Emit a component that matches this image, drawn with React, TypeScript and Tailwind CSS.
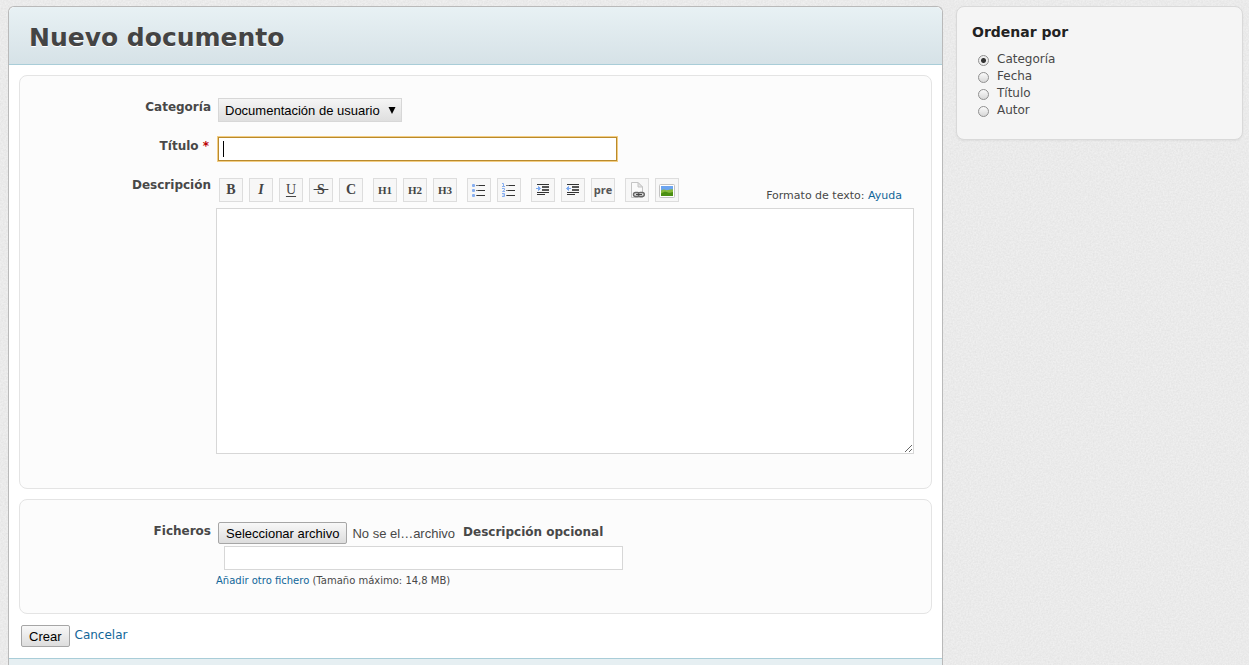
import React, { useRef, useState } from 'react';

const ORDERS = ['Categoría', 'Fecha', 'Título', 'Autor'];

const CATEGORIES = ['Documentación de usuario', 'Documentación técnica'];

type Tool = {
    title: string;
    icon: React.ReactNode;
};

const lines = (
    <>
        <path d="M5 3.5h9M5 8.5h9M5 13.5h9" stroke="#777" />
        <path d="M8 3.5h6M7 8.5h7M6 13.5h8" stroke="#333" />
    </>
);

const indentLines = (
    <g stroke="#333">
        <path d="M2 2.5h12M2 10.5h12M2 12.5h8" />
        <path d="M7 5h7M7 8h7" strokeWidth="2" stroke="#555" />
    </g>
);

const TOOL_GROUPS: Tool[][] = [
    [
        { title: 'Negrita', icon: <b className="text-sm">B</b> },
        { title: 'Cursiva', icon: <b className="text-sm italic">I</b> },
        { title: 'Subrayado', icon: <span className="text-sm underline underline-offset-2">U</span> },
        { title: 'Tachado', icon: <b className="text-sm line-through">{'\u00a0S\u00a0'}</b> },
        { title: 'Código fuente', icon: <b className="text-sm">C</b> },
    ],
    [
        { title: 'Encabezado 1', icon: <b className="text-[11px]">H1</b> },
        { title: 'Encabezado 2', icon: <b className="text-[11px]">H2</b> },
        { title: 'Encabezado 3', icon: <b className="text-[11px]">H3</b> },
    ],
    [
        {
            title: 'Lista sin orden',
            icon: (
                <svg width="16" height="16" viewBox="0 0 16 16" fill="none">
                    {lines}
                    <g fill="#86aef0">
                        <rect x="1" y="2" width="3" height="3" rx="1" />
                        <rect x="1" y="7" width="3" height="3" rx="1" />
                        <rect x="1" y="12" width="3" height="3" rx="1" />
                    </g>
                </svg>
            ),
        },
        {
            title: 'Lista ordenada',
            icon: (
                <svg width="16" height="16" viewBox="0 0 16 16" fill="none">
                    {lines}
                    <g stroke="#86aef0">
                        <path d="M1 1.5h1.5V4M1 4.5h3M1 6.5h2.5v1.5L1.5 9.5H4M1 11.5h2.5v3H1M1.5 13h2" />
                    </g>
                </svg>
            ),
        },
    ],
    [
        {
            title: 'Citar',
            icon: (
                <svg width="16" height="16" viewBox="0 0 16 16" fill="none">
                    {indentLines}
                    <path d="M1 6.5h3M3.5 4.5v4l2-2z" stroke="#7aa8f0" fill="#7aa8f0" />
                </svg>
            ),
        },
        {
            title: 'Quitar cita',
            icon: (
                <svg width="16" height="16" viewBox="0 0 16 16" fill="none">
                    {indentLines}
                    <path d="M6 6.5H3M3.5 4.5v4l-2-2z" stroke="#7aa8f0" fill="#7aa8f0" />
                </svg>
            ),
        },
        {
            title: 'Texto preformateado',
            icon: <b className="font-['Open_Sans',sans-serif] text-[11px] leading-4 text-[#555]">pre</b>,
        },
    ],
    [
        {
            title: 'Enlace a página Wiki',
            icon: (
                <svg width="16" height="16" viewBox="0 0 16 16" fill="none">
                    <path d="M2.5 .5H9L13.5 5v10.5h-11z" fill="#fafafa" stroke="#c4c4c4" />
                    <path d="M9 .5V5h4.5z" fill="#e4e4e4" stroke="#c4c4c4" />
                    <rect x="4.5" y="10.5" width="6" height="4" rx="2" fill="#ddd" stroke="#666" strokeWidth="1.4" />
                    <rect x="9.3" y="10.5" width="6" height="4" rx="2" fill="#ddd" stroke="#666" strokeWidth="1.4" />
                    <path d="M7 12.5h6" stroke="#444" />
                </svg>
            ),
        },
        {
            title: 'Imagen',
            icon: (
                <svg width="16" height="16" viewBox="0 0 16 16" fill="none">
                    <rect x=".5" y="2.5" width="15" height="13" rx="1" fill="#fff" stroke="#c2c2c2" />
                    <path d="M2 4h12v10H2z" fill="#6ba4f0" />
                    <path d="M2 8.5c2-1 3-1.5 5-.5s4-1.5 7-.5V14H2z" fill="#86b93a" />
                    <path d="M2 11.500c3-2 5-2 7-1s3-.5 5-.5v4H2z" fill="#4b8f12" />
                </svg>
            ),
        },
    ],
];

// Paper grain behind the whole page
const Grain: React.FC = () => (
    <svg className="absolute inset-0 -z-10 h-full w-full" aria-hidden="true">
        <filter id="grain" colorInterpolationFilters="sRGB">
            <feTurbulence type="fractalNoise" baseFrequency="0.6" numOctaves="2" />
            <feColorMatrix values="0.07 0 0 0 0.884  0.07 0 0 0 0.884  0.07 0 0 0 0.884  0 0 0 0 1" />
        </filter>
        <rect width="100%" height="100%" filter="url(#grain)" />
    </svg>
);

const Toolbar: React.FC = () => (
    <div className="flex gap-[10px] pl-[3px] font-['Liberation_Serif',serif] leading-none text-[#444]">
        {TOOL_GROUPS.map(group => (
            <div key={group[0].title} className="flex gap-1.5">
                {group.map(tool => (
                    <button
                        key={tool.title}
                        type="button"
                        title={tool.title}
                        className="flex h-6 w-6 items-center justify-center border border-[#ddd] bg-[#f7f7f7]"
                    >
                        {tool.icon}
                    </button>
                ))}
            </div>
        ))}
    </div>
);

type RowProps = {
    id: string;
    label: string;
    required?: boolean;
    children: React.ReactNode;
};

const Row: React.FC<RowProps> = ({ id, label, required, children }) => (
    <div className="grid grid-cols-[191px_minmax(0,1fr)] gap-x-[5px]">
        <label htmlFor={id} className="text-right font-bold">
            {label}
            {required && <span className="pr-0.5 text-[#b00]"> *</span>}
        </label>
        <div>{children}</div>
    </div>
);

const FilePicker: React.FC = () => {
    const inputRef = useRef<HTMLInputElement>(null);
    const [fileName, setFileName] = useState('No se el…archivo');

    return (
        <div className="flex items-start">
            <input
                ref={inputRef}
                id="ficheros"
                type="file"
                tabIndex={-1}
                className="sr-only"
                onChange={e => setFileName(e.target.files?.[0]?.name ?? 'No se el…archivo')}
            />
            <button
                type="button"
                onClick={() => inputRef.current?.click()}
                className="h-[22px] rounded-xs border border-[#a6a6a6] bg-linear-to-b from-[#f8f8f8] to-[#dddddd] px-[7px] pt-px font-['Liberation_Sans',sans-serif] text-[13px] leading-5 text-black"
            >
                Seleccionar archivo
            </button>
            <span className="ml-[5px] font-['Liberation_Sans',sans-serif] text-[13px] leading-6">{fileName}</span>
            <label htmlFor="descripcion-fichero" className="ml-2 leading-5 font-bold">
                Descripción opcional
            </label>
        </div>
    );
};

const App: React.FC = () => {
    const [order, setOrder] = useState('Categoría');

    return (
        <div className="relative isolate flex min-h-screen items-stretch gap-[13px] bg-[#ebebeb] pt-1.5 pr-1.5 pl-2 font-['DejaVu_Sans',sans-serif] text-xs leading-[18px] text-[#484848]">
            <Grain />

            <main className="flex min-w-0 flex-1 flex-col rounded-t-md border border-b-0 border-[#b9b9b9] bg-white">
                <header className="rounded-t-md border-b border-[#a9cdd8] bg-linear-to-b from-[#e8f1f4] to-[#d6e2e7] px-5 pt-[15px] pb-[10px]">
                    <h1 className="text-[25px] leading-8 font-bold text-[#444] [text-shadow:0_1px_0_#fff]">
                        Nuevo documento
                    </h1>
                </header>

                <form className="px-[10px] pt-[10px] pb-[11px]" onSubmit={e => e.preventDefault()}>
                    <div className="flex flex-col gap-[15px] rounded-lg border border-[#e4e4e4] bg-[#fcfcfc] pt-[22px] pr-[17px] pb-[34px]">
                        <Row id="categoria" label="Categoría">
                            <div className="relative ml-0.5 w-fit">
                                <select
                                    id="categoria"
                                    className="block h-6 appearance-none border border-[#d7d7d7] bg-linear-to-b from-[#f5f5f5] to-[#dfdfdf] pt-0.5 pr-[21px] pl-1.5 font-['Liberation_Sans',sans-serif] text-[13px] text-black"
                                >
                                    {CATEGORIES.map(category => (
                                        <option key={category}>{category}</option>
                                    ))}
                                </select>
                                <svg
                                    className="pointer-events-none absolute top-[9px] right-[6px]"
                                    width="8"
                                    height="7"
                                    viewBox="0 0 8 7"
                                >
                                    <path d="M.5 0h7L4 7z" />
                                </svg>
                            </div>
                        </Row>

                        <Row id="titulo" label="Título" required>
                            <div className="relative ml-0.5 max-w-[399px]">
                                <input
                                    id="titulo"
                                    type="text"
                                    placeholder=" "
                                    autoFocus
                                    className="peer block h-6 w-full border border-[#d7d7d7] bg-white px-1 font-['Liberation_Sans',sans-serif] text-[13px] text-black focus:border-[#b98a2c] focus:shadow-[0_0_0_1px_#f3cd83] focus:outline-none"
                                />
                                {/* steady caret while the field is focused and empty */}
                                <span className="pointer-events-none absolute top-1 left-[5px] hidden h-4 w-px bg-black peer-[:focus:placeholder-shown]:block" />
                            </div>
                        </Row>

                        <Row id="descripcion" label="Descripción">
                            <div className="mb-1.5 flex items-end justify-between pt-0.5 pr-3">
                                <Toolbar />
                                <p className="text-[11px] leading-3">
                                    Formato de texto:{' '}
                                    <a href="#ayuda" className="text-[#169] hover:underline">
                                        Ayuda
                                    </a>
                                </p>
                            </div>
                            <textarea
                                id="descripcion"
                                className="block h-[246px] w-full resize border border-[#d7d7d7] bg-white p-1 font-['Liberation_Mono',monospace] text-[13px]"
                            />
                        </Row>
                    </div>

                    <div className="mt-[10px] rounded-lg border border-[#e4e4e4] bg-[#fcfcfc] pt-[22px] pr-[17px] pb-[25px]">
                        <Row id="ficheros" label="Ficheros">
                            <div className="h-[22px] pl-0.5">
                                <FilePicker />
                            </div>
                            <div className="pt-0.5 pl-2">
                                <input
                                    id="descripcion-fichero"
                                    type="text"
                                    className="block h-6 w-full max-w-[399px] border border-[#d7d7d7] bg-white px-1"
                                />
                            </div>
                            <p className="pt-1 text-[10px] leading-[14px]">
                                <a href="#otro-fichero" className="text-[#169] hover:underline">
                                    Añadir otro fichero
                                </a>{' '}
                                (Tamaño máximo: 14,8 MB)
                            </p>
                        </Row>
                    </div>

                    <div className="mt-[11px] ml-0.5 flex items-start gap-[5px]">
                        <button
                            type="submit"
                            className="h-[22px] rounded-xs border border-[#a6a6a6] bg-linear-to-b from-[#f8f8f8] to-[#dddddd] px-[7px] pt-px font-['Liberation_Sans',sans-serif] text-[13px] leading-5 text-black"
                        >
                            Crear
                        </button>
                        <a href="#documentos" className="leading-5 text-[#169] hover:underline">
                            Cancelar
                        </a>
                    </div>
                </form>

                <footer className="flex-1 border-t border-[#a9cdd8] bg-[#e6eff2]" />
            </main>

            <aside className="w-[287px] shrink-0 self-start rounded-lg border border-[#d9d9d9] bg-[#f5f5f5] px-[15px] pt-4 pb-5 shadow-xs">
                <h2 className="mb-[10px] text-sm leading-[18px] font-bold text-[#222]">Ordenar por</h2>
                <div className="pl-1.5">
                    {ORDERS.map(name => (
                        <label key={name} className="flex items-start gap-2 leading-[17px]">
                            <input
                                type="radio"
                                name="orden"
                                checked={order === name}
                                onChange={() => setOrder(name)}
                                className="mt-1 h-[11px] w-[11px] appearance-none rounded-full border border-[#909090] bg-linear-to-b from-[#fafafa] to-[#d8d8d8] checked:bg-[radial-gradient(circle,#333_2px,#eee_3px)]"
                            />
                            {name}
                        </label>
                    ))}
                </div>
            </aside>
        </div>
    );
};

export default App;
